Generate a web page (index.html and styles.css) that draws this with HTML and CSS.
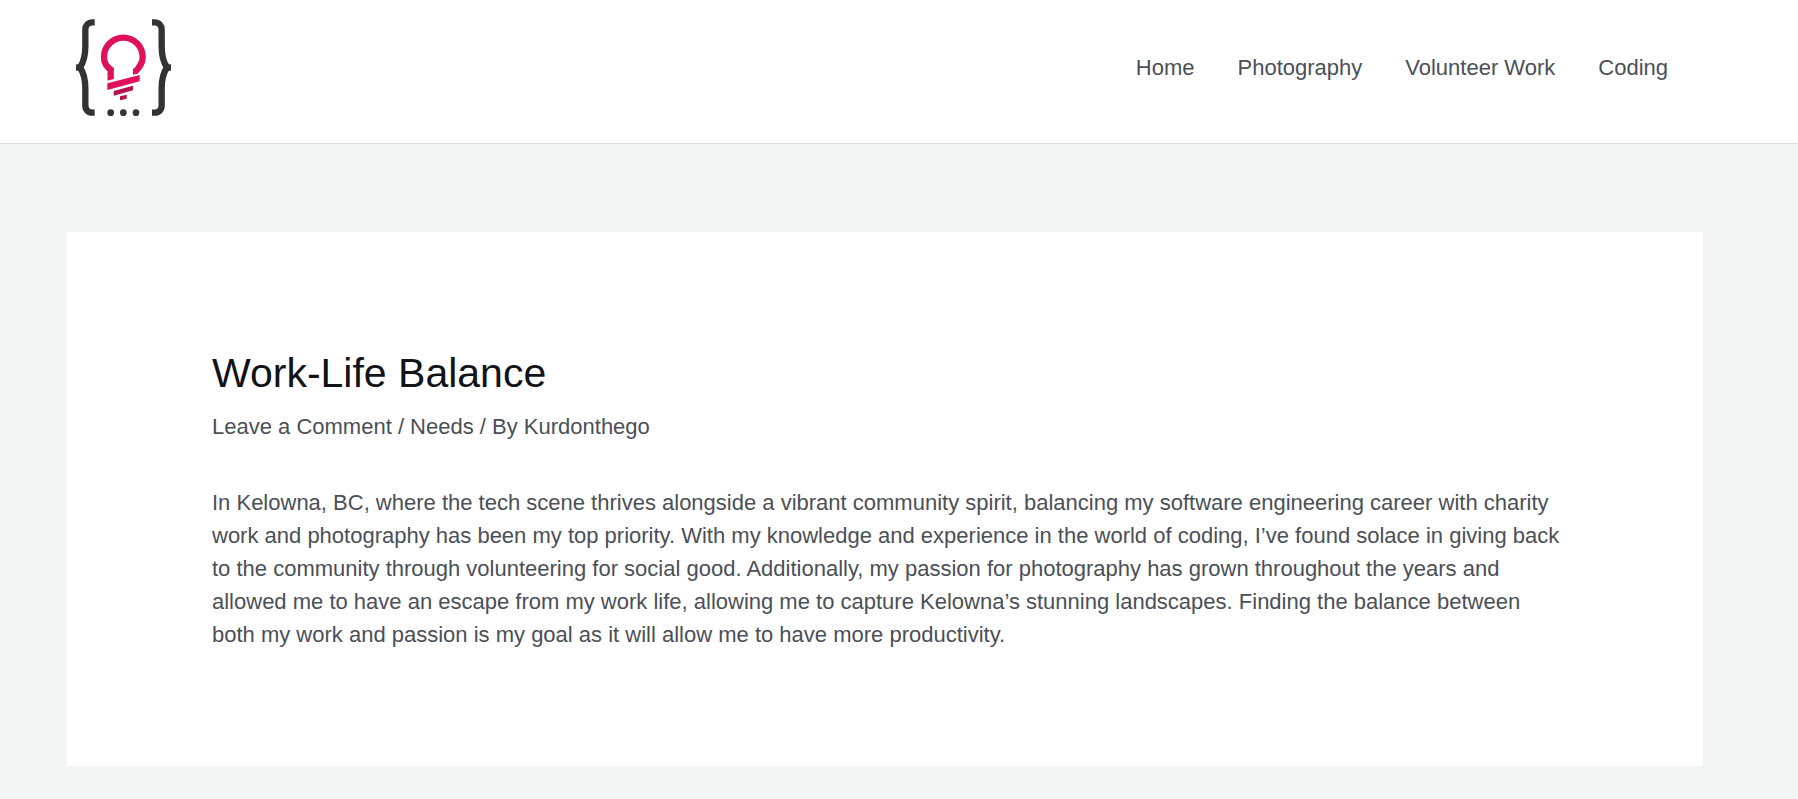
FILE: index.html
```html
<!DOCTYPE html>
<html lang="en">
<head>
<meta charset="utf-8">
<meta name="viewport" content="width=device-width, initial-scale=1">
<title>Work-Life Balance</title>
<link rel="stylesheet" href="styles.css">
</head>
<body>
<header class="site-header">
  <a class="logo" href="#" aria-label="Home page">
    <svg class="logo-image" viewBox="45 55 291 294" aria-hidden="true">
      <g fill="none" stroke="#333" stroke-width="19">
        <path d="M104 68H98C84 68 76 77 76 90V140C76 170 71 188 60 203C71 219 76 236 76 266V317C76 331 84 339 98 339H104"/>
        <path d="M48 203.500H66"/>
        <path d="M276 68H283C297 68 305 77 305 90V140C305 170 310 188 321 203C310 219 305 236 305 266V317C305 331 297 339 283 339H276"/>
        <path d="M333 203.500H315"/>
      </g>
      <path d="M152 244V210C138 200 132 188 132 172A58 58 0 0 1 248 172C248 190 240 203 224 217" fill="none" stroke="#e0115a" stroke-width="19"/>
      <path d="M141 243L162 238V246L141 252Z" fill="#fff"/>
      <path d="M219 209L236 218L231 222L219 225Z" fill="#e0115a"/>
      <path d="M142 251L239 226V245L142 271Z" fill="#e0115a"/>
      <path d="M161 274L219 258V272L161 288Z" fill="#b8104a"/>
      <path d="M180 290L200 285V297L180 302Z" fill="#b8104a"/>
      <g fill="#333">
        <circle cx="152" cy="339" r="10"/>
        <circle cx="190" cy="339" r="10"/>
        <circle cx="228" cy="339" r="10"/>
      </g>
    </svg>
  </a>
  <nav class="menu" aria-label="Main">
    <a href="#">Home</a>
    <a href="#">Photography</a>
    <a href="#">Volunteer Work</a>
    <a href="#">Coding</a>
  </nav>
</header>
<main class="content">
  <article class="post">
    <h1 class="post-title">Work-Life Balance</h1>
    <div class="post-meta"><a href="#">Leave a Comment</a> / <a href="#">Needs</a> / By <a href="#">Kurdonthego</a></div>
    <p class="post-text">In Kelowna, BC, where the tech scene thrives alongside a vibrant community spirit, balancing my software engineering career with charity work and photography has been my top priority. With my knowledge and experience in the world of coding, I’ve found solace in giving back to the community through volunteering for social good. Additionally, my passion for photography has grown throughout the years and allowed me to have an escape from my work life, allowing me to capture Kelowna’s stunning landscapes. Finding the balance between both my work and passion is my goal as it will allow me to have more productivity.</p>
  </article>
</main>
</body>
</html>
```
FILE: styles.css
```css
* {
  box-sizing: border-box;
}

body {
  margin: 0;
  background: #f2f5f4;
  color: #4b4f58;
  font-family: "Liberation Sans", Arial, sans-serif;
  font-size: 22px;
  line-height: 33px;
}

a {
  color: inherit;
  text-decoration: none;
}

.site-header {
  display: flex;
  align-items: center;
  justify-content: space-between;
  padding: 18px 130px 27px 75px;
  background: #fff;
  border-bottom: 1px solid #ddd;
}

.logo {
  display: block;
}

.logo-image {
  display: block;
  width: 97px;
  height: 98px;
}

.menu {
  display: flex;
  flex-wrap: wrap;
  gap: 43px;
}

.content {
  padding: 88px 95px 33px 67px;
}

.post {
  padding: 119px 136px 115px 145px;
  background: #fff;
}

.post-title {
  margin: 0;
  color: #111318;
  font-size: 41px;
  font-weight: 400;
  line-height: 44px;
}

.post-meta {
  margin: 15px 0 43px;
}

.post-text {
  margin: 0;
}
```
